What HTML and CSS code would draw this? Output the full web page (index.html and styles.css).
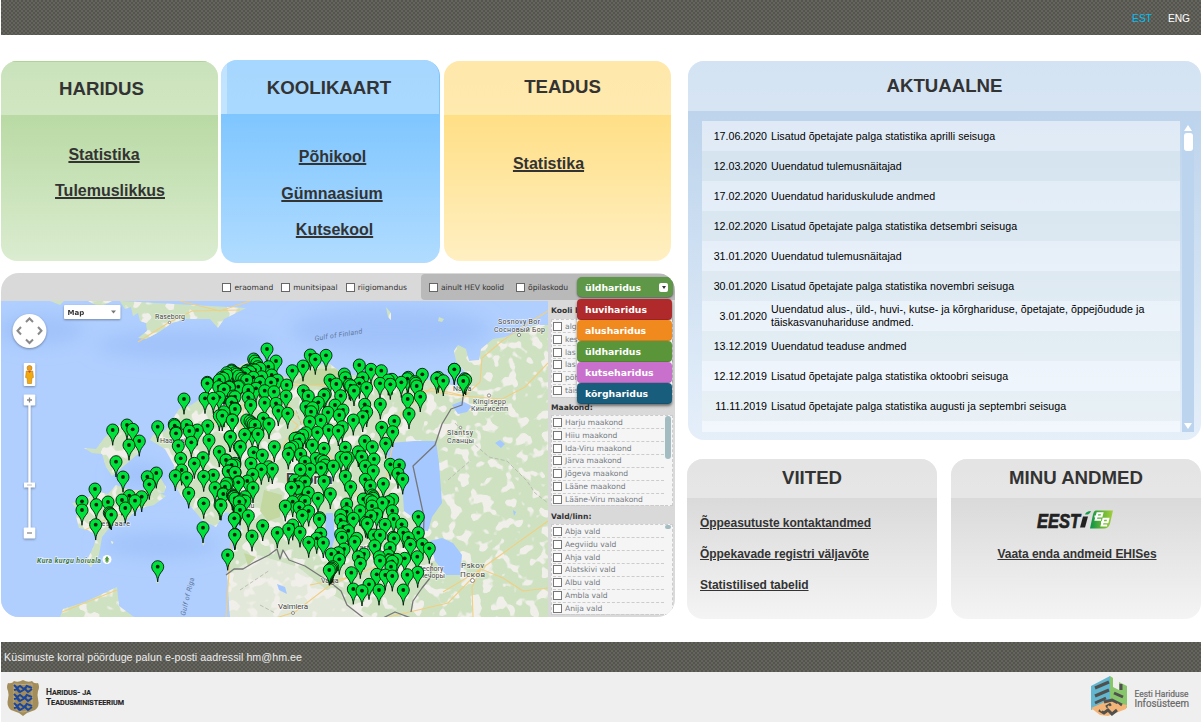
FILE: index.html
```html
<!DOCTYPE html>
<html lang="et">
<head>
<meta charset="utf-8">
<title>Haridussilm</title>
<link rel="stylesheet" href="styles.css">
</head>
<body>
<header class="topbar"><a class="lang active">EST</a><a class="lang">ENG</a></header>
<main class="main">
  <div class="left">
    <div class="cards">
      <section class="card green">
        <h2 class="title">HARIDUS</h2>
        <a class="link l1">Statistika</a>
        <a class="link l2">Tulemuslikkus</a>
      </section>
      <section class="card blue">
        <h2 class="title">KOOLIKAART</h2>
        <a class="link l1">Põhikool</a>
        <a class="link l2">Gümnaasium</a>
        <a class="link l3">Kutsekool</a>
      </section>
      <section class="card yellow">
        <h2 class="title">TEADUS</h2>
        <a class="link l1">Statistika</a>
      </section>
    </div>
    <section class="schoolmap">
      <div class="filters">
        <div class="owner"><label class="chk">eraomand</label><label class="chk">munitsipaal</label><label class="chk">riigiomandus</label></div>
        <div class="extra"><label class="chk">ainult HEV koolid</label><label class="chk">õpilaskodu</label>
          <div class="picker">üldharidus<span class="arrow"></span>
            <div class="menu"><div class="opt red">huviharidus</div><div class="opt orange">alusharidus</div><div class="opt grn">üldharidus</div><div class="opt pink">kutseharidus</div><div class="opt teal">kõrgharidus</div></div>
          </div>
        </div>
      </div>
      <div class="mapbody">
        <svg class="map" viewBox="1 301 547 316" width="547" height="316">
          <defs>
            <filter id="patches" x="0" y="0" width="100%" height="100%" color-interpolation-filters="sRGB">
              <feTurbulence type="fractalNoise" baseFrequency="0.085" numOctaves="2" seed="8"/>
              <feColorMatrix values="0 0 0 0 .945  0 0 0 0 .937  0 0 0 0 .918  14 0 0 0 -7.7"/>
            </filter>
            <filter id="shade" x="-10%" y="-10%" width="120%" height="120%"><feGaussianBlur stdDeviation="9"/></filter>
            <clipPath id="landclip"><use href="#land"/></clipPath>
            <path id="land" d="M50 301L60 305 64 301ZM88 301L100 307 112 301ZM120 301l5 8 6-2 2 9 5-3 2 8 6 2 1 8-9 7 8 1 13-7 13-9 14-4 24 0 8 9 6-9 22-11ZM150 440l3-5 12-4 6-9 8-13 12-4 14-9 8-15 15-10 22-10 13 8 26 9 12-8 10-5 19-1 14 11 40 0 36 3 36 8 10-1-1-13-9-11-2-10 4-6 8 4 3 12 10-1 2-11 12-10 12-2 16-6 12-6 18 0V617H230l-3-44 6-23 8-20-3-15-13-3-9 15-14-7-13-16-9-10-7-13 1-16-9-16ZM84 448l12 1 9-12 14-12 11 4 12 8-4 17-13 11-13 11-6-9-4-13-10-1ZM72 503l14-3 9-9 13 3 8-9 14 5 22 0 14 6-12 9-17 4-11 12-16 6-8 10-3 18-8 12-5-5 7-14 4-12-9-6-9-2-3-12 5-2ZM144 485l16-8 6 10-2 6-11 1ZM60 617l3-8 22-7 32-15 2 19 15 11ZM386 307l5 6 0 7-3-3ZM439 317l5 2-2 3-4-1ZM111 541l3 1-2 2ZM202 542l3 1-2 3ZM156 581h3v2h-3Z"/>
            <symbol id="pin" viewBox="-7 -7 14 24" overflow="visible"><path d="M0 15.3C-.3 10.500-1.500 8-3.500 5.500-5 3.800-6 2.200-6 0A6 6 0 1 1 6 0C6 2.200 5 3.800 3.500 5.500 1.500 8 .3 10.500 0 15.300Z" fill="#00e13c" stroke="#001a06" stroke-width=".9"/><circle r="1.900" fill="#00220a"/></symbol>
          </defs>
          <rect x="1" y="301" width="547" height="316" fill="#b0cfff"/>
          <g filter="url(#shade)" fill="#a0c2fa"><ellipse cx="390" cy="330" rx="100" ry="22"/><ellipse cx="185" cy="345" rx="90" ry="14"/><ellipse cx="40" cy="330" rx="45" ry="15"/><ellipse cx="140" cy="475" rx="25" ry="12"/><ellipse cx="160" cy="545" rx="60" ry="12"/></g>
          <use href="#land" fill="#cee2c2"/>
          <g clip-path="url(#landclip)"><rect x="1" y="301" width="547" height="316" filter="url(#patches)"/>
            <path d="M228 575l30-20 40 12 35 28 40 22H228Z" fill="#f1efe9" opacity=".6"/>
            <path d="M264 490l18 5-2 22-12 4-8-10ZM293 383l20-14 30-1 10 12-30 7ZM244 553l12 4-8 9Z" fill="#c3d7a0"/></g>
          <g fill="#a4c8ff"><path d="M386 453l4-10 24-2 22 0 3 22 3 40-10 14-4 14-8-1-9-14-7-5-2-30Z"/><path d="M430 541l12-3 11 5 9 12-2 20-14 0-11-14Z"/><path d="M326 513l7 0 2 24-4 14-6-19ZM277 584l8 3 2 7-8-4ZM452 405l10-4 10 5-5 6-9 2ZM495 443l5-3 5 4-4 4ZM513 510l3 2-2 4Z"/></g>
          <g class="road"><path d="M262 380l40 6 80-2 80 12 40 3 23-12 23-24M250 372l-10 60-5 85-5 40-4 60M270 380l30 40 50 60 15 35 15 50-50 20-35 27-32 10-43 4M465 396l-34-8-30 25-10 40-6 30-20 30M238 505l60-80-40-30-78 50M310 585l35-7 25-23 40 0 20-4M388 617l60-14 33-34 67-48M481 569l22 9 20 13 25-3M473 617l-1-30 9-18-38 23M465 396l15-14 2-24 20-17 25-17 21-13M138 342l30-19 24-12 48-1M180 301l40 10 30-10M62 612l55-22M85 530l20-10 40-15"/></g>
          <g class="rail"><path d="M455 423l18 20 16 14 18 4 20 20 8 12 13 10M448 480l23-20M296 410l8 22-12 20 30 10M240 590l30-20M260 605l15 8"/></g>
          <g class="border"><path d="M226 575l8-6 9 0 10-6 16-8 8-6 3 10 3-9 6 10 16 6 20 13 6 4 10 8 6 14 18 14 14 1 16-8 16 6 20 4M411 612l2-11 9-13 8-10 2-15M463 397l-1 8-11 4-9 15-7 21-22 21 11 51-1 32"/></g>
          <g class="place">
            <text x="155" y="319" textLength="30">Raseborg</text><text x="160" y="443">Haapsalu</text><text x="89" y="526" textLength="41">Kuressaare</text>
            <text x="498" y="324" textLength="42">Sosnovy Bor</text><text x="494" y="332" textLength="51">Сосновый Бор</text><text x="453" y="391">Narva</text>
            <text x="473" y="404" textLength="33">Kingisepp</text><text x="471" y="411" textLength="37">Кингисепп</text><text x="447" y="435" textLength="26">Slantsy</text><text x="447" y="443" textLength="27">Сланцы</text>
            <text x="461" y="568" class="city" textLength="23">Pskov</text><text x="460" y="577" class="city" textLength="25">Псков</text><text x="278" y="609" class="city" textLength="30">Valmiera</text><text x="321" y="583">Valga</text><text x="418" y="571">Pechory</text><text x="419" y="578">Печоры</text><text x="236" y="508">Pärnu</text><text x="355" y="550" class="city">Tartu</text>
            <text x="286" y="484" class="country">Estonia</text>
            <text class="sea" transform="translate(315 341) rotate(-9)" textLength="48">Gulf of Finland</text><text class="sea" transform="translate(185 616) rotate(-76)" textLength="39">Gulf of Riga</text><text class="park" x="37" y="563" textLength="64">Kura kurgu hoiuala</text>
          </g>
          <g fill="#fff" stroke="#666" stroke-width=".7"><circle cx="169.500" cy="322.500" r="1.200"/><circle cx="519" cy="335" r="1.600"/><circle cx="489" cy="395.500" r="1.600"/><circle cx="460.500" cy="427.500" r="1.200"/><circle cx="472.500" cy="580.500" r="2"/><circle cx="293" cy="613" r="1.500"/></g>
          <circle cx="107" cy="559.500" r="4.500" fill="#fff"/><path d="M107 556l2.500 3.500h-1.500l1 2h-1.500v1.500h-1v-1.500H105l1-2h-1.500Z" fill="#4f9a3e"/>
          <g id="pins"></g>
          <g class="control">
            <rect x="64" y="305" width="56.500" height="14" rx="1"/><text x="67.500" y="314.500">Map</text><path d="M111 310.500h5l-2.500 3Z" fill="#777"/>
            <circle cx="29.500" cy="331" r="17"/><path d="M26 322l3.500-3.500 3.500 3.500M26 339.500l3.500 3.500 3.500-3.500M21 327l-3.500 3.700 3.500 3.800M38 327l3.500 3.700-3.500 3.800" class="chev"/>
            <rect x="23.700" y="363" width="11.600" height="23" rx="1"/><circle cx="29.500" cy="368" r="2.500" fill="#e9a11c" stroke="#b77510" stroke-width=".6"/><path d="M26.300 371h6.400l.7 6.500-1.500.5-.4 5.500h-4l-.4-5.500-1.500-.5Z" fill="#f0a90f" stroke="#c07a10" stroke-width=".6"/><path d="M28 371h3l-1.500 2Z" fill="#d43"/>
            <rect x="28.300" y="405" width="2.400" height="124" /><rect x="23.700" y="394.500" width="11.600" height="11" rx="1"/><path d="M27 400h5M29.500 397.500v5" class="chev thin"/><rect x="24" y="482.500" width="11" height="5"/><path d="M27 485h5" stroke="#bbb"/><rect x="23.700" y="527.500" width="11.600" height="11" rx="1"/><path d="M27 533h5" class="chev thin"/>
          </g>
        </svg>
        <aside class="side">
          <h4 class="sh first">Kooli liik:</h4><div class="list six"><label class="chk">alg</label><label class="chk">kes</label><label class="chk">las</label><label class="chk">las</label><label class="chk">põh</label><label class="chk">täis</label></div>
          <h4 class="sh">Maakond:</h4><div class="list bar"><label class="chk">Harju maakond</label><label class="chk">Hiiu maakond</label><label class="chk">Ida-Viru maakond</label><label class="chk">Järva maakond</label><label class="chk">Jõgeva maakond</label><label class="chk">Lääne maakond</label><label class="chk">Lääne-Viru maakond</label></div>
          <h4 class="sh">Vald/linn:</h4><div class="list bar short"><label class="chk">Abja vald</label><label class="chk">Aegviidu vald</label><label class="chk">Ahja vald</label><label class="chk">Alatskivi vald</label><label class="chk">Albu vald</label><label class="chk">Ambla vald</label><label class="chk">Anija vald</label></div>
        </aside>
      </div>
    </section>
  </div>
  <div class="right">
    <section class="card news">
      <h2 class="title">AKTUAALNE</h2>
      <div class="newsbody">
        <div class="rows">
          <div class="row"><time>17.06.2020</time><p>Lisatud õpetajate palga statistika aprilli seisuga</p></div>
          <div class="row"><time>12.03.2020</time><p>Uuendatud tulemusnäitajad</p></div>
          <div class="row"><time>17.02.2020</time><p>Uuendatud hariduskulude andmed</p></div>
          <div class="row"><time>12.02.2020</time><p>Lisatud õpetajate palga statistika detsembri seisuga</p></div>
          <div class="row"><time>31.01.2020</time><p>Uuendatud tulemusnäitajad</p></div>
          <div class="row"><time>30.01.2020</time><p>Lisatud õpetajate palga statistika novembri seisuga</p></div>
          <div class="row"><time>3.01.2020</time><p>Uuendatud alus-, üld-, huvi-, kutse- ja kõrghariduse, õpetajate, õppejõudude ja täiskasvanuhariduse andmed.</p></div>
          <div class="row"><time>13.12.2019</time><p>Uuendatud teaduse andmed</p></div>
          <div class="row"><time>12.12.2019</time><p>Lisatud õpetajate palga statistika oktoobri seisuga</p></div>
          <div class="row"><time>11.11.2019</time><p>Lisatud õpetajate palga statistika augusti ja septembri seisuga</p></div>
          <div class="row"></div>
        </div>
        <div class="scroll"><i class="up"></i><i class="thumb"></i><i class="down"></i></div>
      </div>
    </section>
    <div class="pair">
      <section class="card gray">
        <h2 class="title">VIITED</h2>
        <a class="small">Õppeasutuste kontaktandmed</a>
        <a class="small">Õppekavade registri väljavõte</a>
        <a class="small">Statistilised tabelid</a>
      </section>
      <section class="card gray own">
        <h2 class="title">MINU ANDMED</h2>
        <svg class="eesti" width="78" height="20" viewBox="0 0 78 20"><defs><linearGradient id="lg" x1="0" x2="1"><stop offset="0" stop-color="#07924a"/><stop offset=".5" stop-color="#62b335"/><stop offset="1" stop-color="#a5cf3c"/></linearGradient></defs>
          <text x="1" y="17.500" class="wordmark" textLength="43" lengthAdjust="spacingAndGlyphs">EEST</text>
          <path d="M47 6.500h5l-3 11h-5Z" fill="#222"/><path d="M49 4.500q1-3.500 6-3.500-1 3-3 3.500Z" fill="#169b4a"/>
          <path d="M60 .5h17l-3 13q-1.500 5-6 5H54l3-14q1-4 3-4Z" fill="url(#lg)"/><g fill="none" stroke="#fff" stroke-width="2.100"><path d="M58.500 6.500h7l.8-3.200H61.500l-1.800 6.500h5.500"/><path d="M65 12.200h6.500l.8-3.500H67.500l-1.800 6.800h5.500"/></g></svg>
        <a class="small">Vaata enda andmeid EHISes</a>
      </section>
    </div>
  </div>
</main>
<footer>
  <div class="contact">Küsimuste korral pöörduge palun e-posti aadressil hm@hm.ee</div>
  <div class="logos">
    <svg width="130" height="50" viewBox="1 672 130 50">
      <path d="M8 683q4 1 6-2 4 2 9-1 5 3 9 1 2 3 6 2 2 4 0 8-1 4 0 8 2 8-3 11l-8 3-4 3-4-3-8-3q-5-4-3-11 1-5 0-8-2-4 0-8Z" fill="#a38d5a"/>
      <path d="M14 684q9 1 18 0v20q-1 7-9 8-8-1-9-8Z" fill="#a38d5a" stroke="#c7b894" stroke-width=".7"/>
      <g id="lion" fill="none" stroke="#1846a0" stroke-width="1.900"><path d="M14 685l3 3 3-2 4 3 3-3 5 2M14 690l4-1 2 3 5-3 3 3 4-3M16 687l3 5M27 685l-2 5"/></g><use href="#lion" y="9"/><use href="#lion" y="18"/>
      <g class="ministry"><text x="46" y="695" textLength="45" lengthAdjust="spacingAndGlyphs">Haridus- ja</text><text x="46" y="704.500" textLength="78" lengthAdjust="spacingAndGlyphs">Teadusministeerium</text></g>
    </svg>
    <svg width="110" height="50" viewBox="1088 672 110 50">
      <path d="M1091 686l19-10v25l-19 9Z" fill="#62b6cf"/><path d="M1110 676l3 2v9l6 3v-8l8 4v22l-17-6Z" fill="#87c66b"/><path d="M1091 708l16-7 5 1 15 3-1 4-18 7-8-1Z" fill="#f3b477"/>
      <g fill="none" stroke="#50504e" stroke-width="3"><path d="M1095 688l14-6M1095 696l14-6M1095 703l11-5M1114 693l9 4M1121 684v6M1104 702l8-2 10 5M1099 710l5 3 4-3 4 4 5-4M1111 704l-5 3"/></g>
      <path d="M1098 706l4 5M1108 706l5 5M1117 704l4 4" stroke="#f3b477" stroke-width="2"/>
      <g class="ehis"><text x="1134.500" y="696.500" font-size="9" textLength="54" lengthAdjust="spacingAndGlyphs">Eesti Hariduse</text><text x="1134.500" y="706.500" font-size="10.500" textLength="54.500" lengthAdjust="spacingAndGlyphs">Infosüsteem</text></g>
    </svg>
  </div>
</footer>
<script src="map.js"></script>
</body>
</html>
```
FILE: styles.css
```css
*,*::before,*::after{box-sizing:border-box}
body{margin:0;padding:0 2px 0 1px;background:#fff;color:#333;font-family:"Liberation Sans",Arial,sans-serif}
h2,h4,p{margin:0}
.topbar,.contact{background-color:#585852;background-image:conic-gradient(#65655e 25%,#555550 0 50%,#65655e 0 75%,#555550 0);background-size:4px 4px}
.topbar{height:35px;display:flex;justify-content:flex-end;align-items:center;gap:16px;padding:2px 11px 0 0}
.lang{font-size:10.200px;color:#fff}
.lang.active{color:#00c0f3}
.main{display:flex;justify-content:space-between;height:607px;padding-top:25px}
.left{width:674px}
.right{width:514px;padding-top:1px}
.cards{display:flex;align-items:flex-start;height:213px}
.card{border-radius:16px;overflow:hidden;display:flex;flex-direction:column}
.title{display:flex;align-items:center;justify-content:center;font-size:18.670px;font-weight:bold;background:rgba(255,255,255,.34);flex:none}
.green,.yellow{margin-top:1px;height:200px}
.green{width:217px;margin-right:3px;background:linear-gradient(#afd498,#b9daa4 27%,#dbecd0)}
.blue{width:219px;margin-right:4px;height:203px;background:linear-gradient(#79c2fd,#7fc6ff 27%,#b1dcff)}
.yellow{width:227px;background:linear-gradient(#ffdc7e,#ffdf86 27%,#ffefc2)}
.green .title,.blue .title,.yellow .title{height:54px}
.green .title{padding-right:16px;border-top:1px solid #afd498}
.blue .title{padding:1px 2px 0 0;margin-right:1px;box-shadow:inset 6px 0 rgba(255,255,255,.3);border-top-right-radius:15px}
.yellow .title{padding:0 0 3px 10px}
.link{font-size:16px;line-height:18px;font-weight:bold;text-decoration:underline;text-decoration-thickness:2px;text-underline-offset:1px;text-align:center}
.green .l1{padding:31px 11px 0 0}
.green .l2{padding:18px 0 0 1px}
.blue .l1{padding:34px 0 0 4px}
.blue .l2{padding:19px 0 0 3px}
.blue .l3{padding:18px 0 0 8px}
.yellow .l1{padding:40px 18px 0 0}
.schoolmap{height:344px;border-radius:18px;overflow:hidden;background:#d9d9d9;font-family:"DejaVu Sans",Verdana,sans-serif;font-size:7.600px;color:#333}
.filters{display:flex;height:28px;justify-content:flex-end}
.owner,.extra{display:flex;align-items:center}
.owner{gap:8px;padding-right:14px}
.extra{width:254px;gap:12px;background:#b9b9b9;padding-left:8px;border-radius:4px 0 0 4px;height:26px;margin-top:1px}
.extra .chk{letter-spacing:-.08px;flex:none}
.chk{display:flex;align-items:center;white-space:nowrap}
.chk::before{content:"";width:9px;height:9px;border:1px solid #666;background:#fff;margin-right:3px;flex:none}
.picker{position:relative;flex:none;width:96px;height:20px;border-radius:5px;background:#5f9748;color:#fff;font-weight:bold;font-size:9.300px;display:flex;align-items:center;justify-content:space-between;padding:0 5px 0 8px;margin-left:-3px;box-shadow:0 1px 2px #555}
.arrow{width:9px;height:9px;background:#fff;border-radius:2px;display:grid;place-items:center}
.arrow::after{content:"";width:0;height:0;border:2.500px solid transparent;border-top:3px solid #333;border-bottom:0}
.menu{position:absolute;z-index:2;left:0;top:22px;width:95px;border-radius:4px;box-shadow:0 2px 3px rgba(0,0,0,.5)}
.opt{height:21px;border-radius:4px;display:flex;align-items:center;padding-left:8px;box-shadow:inset 0 -1px rgba(0,0,0,.12)}
.red{background:#b02a2b}.orange{background:#f18a1e}.grn{background:#5a9539}.pink{background:#c870cc}.teal{background:#185d7b}
.mapbody{display:flex;height:316px}
.map{flex:none;display:block}
.road{fill:none;stroke:#f0cf83;stroke-width:1.100}
.rail{fill:none;stroke:#b4b4ac;stroke-width:.8;stroke-dasharray:4 2}
.border{fill:none;stroke:#777;stroke-width:1.300;stroke-linejoin:round}
.place{font:7px Roboto,sans-serif;fill:#444;stroke:#fff;stroke-width:1.300;stroke-opacity:.65;paint-order:stroke}
.city{font-size:8px}.country{font-size:14px;font-weight:bold}.sea{fill:#61779b;stroke:none;font-style:italic}.park{fill:#41763d;font-style:italic;font-weight:bold}
.control{fill:#fff;filter:drop-shadow(0 1px 1px rgba(0,0,0,.35))}
.control text{fill:#333;font:bold 7px "DejaVu Sans",sans-serif}
.chev{fill:none;stroke:#888;stroke-width:2}.thin{stroke-width:1.300}
.side{flex:1;padding:5px 2px 0 3px;display:flex;flex-direction:column}
.sh{font-size:7.600px;line-height:10px;height:12px;flex:none}
.sh.first{height:13px}
.list{position:relative;flex:none;height:91px;margin-bottom:6px;background:#f5f5f5;border:1px dashed #ccc;padding:.5px 8px 0 1px;color:#74797f}
.list .chk{height:12.850px;border-bottom:1px dashed #ccc}
.list .chk::before{border-color:#777}
.list.six{height:79px;margin-bottom:5px}
.list.bar::after{content:"";position:absolute;right:1px;top:0;width:6px;height:43px;border-radius:3px;background:#a2bcc2}
.list.short::after{height:4px}
.news{width:513px;height:379px;margin-left:1px;background:linear-gradient(#b7d1ec,#bdd4ec 14%,#e5effa)}
.news .title{height:50px;background:rgba(255,255,255,.4)}
.newsbody{display:flex;gap:2px;padding:10px 0 0 14px}
.rows{width:478px;height:311px;overflow:hidden}
.row{height:30px;display:flex;align-items:center;font-size:10.670px;line-height:13px;color:#000;background:rgba(255,255,255,.5)}
.row:nth-child(even){background:rgba(240,245,240,.42)}
.row time{width:65px;text-align:right;margin-right:4px}
.row p{width:395px;letter-spacing:.04px}
.scroll{width:12px;height:311px;background:#bcd4ed;display:flex;flex-direction:column;align-items:center;padding-top:4px}
.scroll i{flex:none}
.up{border:4px solid transparent;border-top:0;border-bottom:6px solid #fff;margin-bottom:2px}
.thumb{width:9px;height:18px;border-radius:3px;background:#fff}
.down{border:4px solid transparent;border-bottom:0;border-top:6px solid #fff;margin-top:auto;margin-bottom:3px}
.pair{display:flex;gap:14px;margin-top:19px}
.gray{width:250px;height:160px;background:linear-gradient(#d6d6d6,#dadada 25%,#f4f4f4)}
.gray .title{height:39px;margin-bottom:17px;padding-bottom:1px}
.small{font-size:12px;line-height:16px;font-weight:bold;text-decoration:underline;text-underline-offset:1px;padding-left:13px;margin-bottom:15px;letter-spacing:-.04px}
.own{align-items:center}
.own .title{width:100%;margin-bottom:12px}
.own .small{padding-left:2px;margin-top:16px}
.eesti{margin-right:2px;flex:none}
.wordmark{font:italic bold 20px "Liberation Sans",sans-serif;fill:#222;stroke:#222;stroke-width:.7}
.contact{height:30px;display:flex;align-items:center;padding-left:3px;font-size:10.670px;color:#eee;letter-spacing:.05px}
.logos{height:50px;background:#efefef;display:flex;justify-content:space-between;padding-right:3px}
.ministry{font:500 8.500px Roboto,sans-serif;font-variant-caps:small-caps;fill:#222;stroke:#222;stroke-width:.2}
.ehis{font-family:Roboto,sans-serif;fill:#686868;stroke:#686868;stroke-width:.2}
```
FILE: map.js
```js
// School positions, grouped by map sheet. Sheet units are a third of a map pixel.
const sheets = [
  [0, 270, "695,303 680,315 670,325 705,308 715,312 658,330 622,340 622,337 656,350 672,358 688,352 715,350 615,385 640,385 658,382 705,380 694,395 705,415 552,387 658,437 672,425 697,450 338,480 381,465 398,478 473,470 387,525 418,513 523,463 524,467 528,487 528,490 560,465 568,483 592,480 623,467 535,527 574,517 627,510 690,500 658,545 718,530"],
  [0, 440, "348,65 369,111 442,110 469,99 448,133 285,147 246,184 246,210 289,194 324,186 328,218 331,221 334,224 287,254 366,180 388,167 405,182 425,170 376,204 542,55 583,70 609,53 679,60 545,90 526,107 560,113 611,109 640,105 704,75 685,93 705,97 566,159 611,190 645,143 675,140 670,162 684,130 700,170 660,194 704,235 704,284 609,263 683,345 473,380 715,125"],
  [220, 270, "141,237 101,267 105,273 110,280 168,273 145,290 105,300 98,298 90,305 84,300 75,310 78,303 120,295 113,290 35,300 20,308 50,312 56,318 65,325 72,329 80,330 100,322 125,320 155,315 5,322 217,302 249,288 271,255 286,268 318,256 418,285 453,298 484,302 200,345 330,330 349,342 373,312 376,323 388,343 392,347 402,362 428,323 440,353 418,340 250,362 265,378 312,375 316,372 362,377 480,340 505,330 516,328 511,343 544,337 565,322 562,326 590,348 585,335 587,340 607,313 655,322 650,325 670,332 703,298 563,387 601,380 567,431 12,357 28,350 58,348 85,360 108,355 120,337 153,337 172,330 134,362 162,365 40,378 85,382 198,378 35,397 92,405 134,398 168,400 45,417 175,422 203,430 7,437 37,450 130,445 80,450 90,453 95,458 105,465 100,462 147,461 258,410 273,425 278,413 295,397 345,405 324,427 358,435 369,420 434,403 440,425 428,440 400,450 481,402 302,450 269,455 367,470 326,480 355,482 292,487 258,488 248,495 238,508 225,505 232,503 485,472 523,453 518,485 31,500 74,493 114,492 97,490"],
  [220, 440, "434,3 497,10 61,20 101,37 127,45 18,60 163,20 205,42 210,25 218,20 242,42 230,15 277,15 312,25 376,22 457,20 93,70 25,93 45,97 45,70 35,75 124,88 157,86 146,80 98,103 55,127 82,123 99,143 20,130 10,160 3,195 37,164 40,167 42,170 45,175 58,185 64,180 75,170 75,183 60,210 85,227 43,235 45,283 96,288 128,257 172,278 206,267 218,255 240,276 266,307 241,88 255,65 270,87 288,55 305,60 312,64 303,83 315,75 340,78 363,52 378,54 385,53 415,35 425,50 436,78 462,57 460,92 376,108 511,73 538,75 534,100 548,117 225,120 245,125 255,125 214,142 235,140 312,123 392,140 436,118 451,137 490,131 265,157 294,175 331,161 196,198 218,185 240,180 248,182 255,183 238,202 247,226 266,213 298,237 299,233 302,280 310,308 290,295 380,192 380,215 400,235 362,225 362,240 420,212 430,177 457,165 460,170 460,175 457,185 450,180 456,198 487,188 518,178 505,185 517,212 453,228 470,222 442,250 437,247 495,253 521,237 545,253 595,230 595,278 550,278 370,260 385,272 366,292 362,282 404,305 410,295 462,285 480,285 522,295 519,292 565,293 571,313 607,312 628,325 464,317 510,323 334,342 355,338 372,327 358,358 415,350 432,342 421,370 478,350 480,362 505,345 513,380 510,360 517,364 530,358 554,355 592,350 328,390 332,387 335,384 338,380 394,398 470,403 496,405 517,408 562,404 593,397 400,447 426,452 447,433 477,450 550,450"],
  [440, 270, "43,298 70,333 74,326 77,329"]
];

const pins = sheets
  .flatMap(([ox, oy, list]) => list.split(" ").map(p => {
    const [x, y] = p.split(",").map(Number);
    return [ox + x / 3, oy + y / 3];
  }))
  .sort((a, b) => a[1] - b[1]);

document.getElementById("pins").innerHTML = pins
  .map(([x, y]) => `<use href="#pin" x="${(x - 7).toFixed(1)}" y="${(y - 7).toFixed(1)}" width="14" height="24"/>`)
  .join("");
```
